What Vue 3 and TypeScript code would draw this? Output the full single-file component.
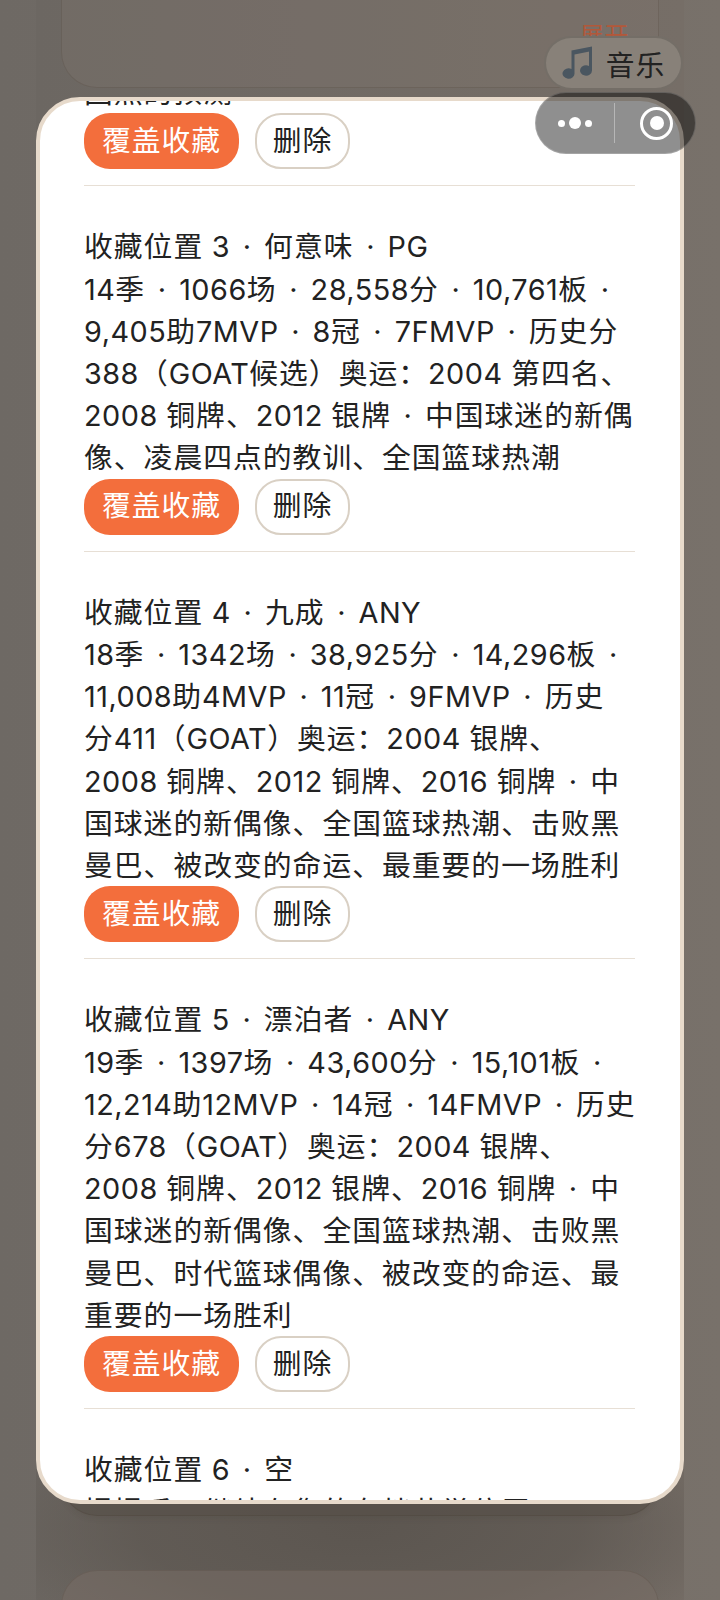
<script setup lang="ts">
interface Slot { title: string; body: string }
interface Token { text: string; kind: 'cjk' | 'mid' | 'latin' }

const slots: Slot[] = [
  { title: '收藏位置 3 · 何意味 · PG', body: '14季 · 1066场 · 28,558分 · 10,761板 · 9,405助7MVP · 8冠 · 7FMVP · 历史分388（GOAT候选）奥运：2004 第四名、2008 铜牌、2012 银牌 · 中国球迷的新偶像、凌晨四点的教训、全国篮球热潮' },
  { title: '收藏位置 4 · 九成 · ANY', body: '18季 · 1342场 · 38,925分 · 14,296板 · 11,008助4MVP · 11冠 · 9FMVP · 历史\n分411（GOAT）奥运：2004 银牌、\n2008 铜牌、2012 铜牌、2016 铜牌 · 中国球迷的新偶像、全国篮球热潮、击败黑曼巴、被改变的命运、最重要的一场胜利' },
  { title: '收藏位置 5 · 漂泊者 · ANY', body: '19季 · 1397场 · 43,600分 · 15,101板 · 12,214助12MVP · 14冠 · 14FMVP · 历史分678（GOAT）奥运：2004 银牌、2008 铜牌、2012 银牌、2016 铜牌 · 中国球迷的新偶像、全国篮球热潮、击败黑曼巴、时代篮球偶像、被改变的命运、最重要的一场胜利' },
]

const tokens = (text: string): Token[] =>
  text
    .split(/(·|[\u3000-\u9fff\uff00-\uffef]+)/)
    .filter((t) => t.length > 0)
    .map((t): Token => ({
      text: t,
      kind: t === '·' ? 'mid' : /^[\u3000-\u9fff\uff00-\uffef]/.test(t) ? 'cjk' : 'latin',
    }))

const lastTitle = '收藏位置 6 · 空'
</script>

<template>
  <div class="screen">
    <div class="page">
      <section class="card card-top"><span class="expand">展开</span></section>
      <section class="card card-mid"></section>
      <section class="card card-low"></section>
    </div>

    <div class="modal">
      <div class="scroller">
        <div class="list">
          <article class="slot slot-first">
            <p class="line cjk">固然的预测</p>
            <div class="actions">
              <button class="btn primary">覆盖收藏</button>
              <button class="btn ghost">删除</button>
            </div>
          </article>
          <article v-for="s in slots" :key="s.title" class="slot">
            <p class="line"><span v-for="(t, i) in tokens(s.title)" :key="i" :class="t.kind">{{ t.text }}</span></p>
            <p class="line"><span v-for="(t, i) in tokens(s.body)" :key="i" :class="t.kind">{{ t.text }}</span></p>
            <div class="actions">
              <button class="btn primary">覆盖收藏</button>
              <button class="btn ghost">删除</button>
            </div>
          </article>
          <article class="slot slot-last">
            <p class="line"><span v-for="(t, i) in tokens(lastTitle)" :key="i" :class="t.kind">{{ t.text }}</span></p>
            <p class="line cjk">提提后，继续在您的存档荣誉位置</p>
          </article>
        </div>
      </div>
    </div>

    <div class="music">
      <svg class="note" width="34" height="36" viewBox="0 0 34 36" aria-hidden="true">
        <path d="M9.5 5.5 L30 1.5 V6 L12.5 9.5 V28 A6 5.2 0 1 1 9.5 24 Z" fill="#4a5660" />
        <path d="M27 4 H30 V25.5 A6 5.2 0 1 1 27 21 Z" fill="#4a5660" />
      </svg>
      <span>音乐</span>
    </div>

    <div class="capsule">
      <div class="dots"><i class="dot"></i><i class="dot big"></i><i class="dot"></i></div>
      <i class="sep"></i>
      <div class="ring"><i></i></div>
    </div>
  </div>
</template>

<style>
html, body { margin: 0; padding: 0; }
</style>

<style scoped>
.screen {
  position: relative;
  width: 720px;
  height: 1600px;
  overflow: hidden;
  background: linear-gradient(90deg, #6e6964 0%, #726c67 50%, #78716a 100%);
  font-family: Inter, "Noto Sans CJK SC", sans-serif;
  letter-spacing: 0.5px;
  color: #222;
}
.page {
  box-sizing: border-box;
  height: 1600px;
  margin: 0 36px;
  padding: 0 25px;
  display: flex;
  flex-direction: column;
  gap: 54px;
  background:
    radial-gradient(ellipse 62% 9% at 50% 95.5%, #5c5650 0%, rgba(92, 86, 80, 0.75) 55%, rgba(92, 86, 80, 0) 100%),
    linear-gradient(90deg, #6c6762 0%, #766e67 100%);
}
.card {
  box-sizing: border-box;
  flex: none;
  border: 1px solid rgba(60, 48, 36, 0.16);
  border-radius: 36px;
}
.card-top {
  height: 88px;
  border-top: 0;
  border-radius: 0 0 36px 36px;
  background: rgba(130, 120, 110, 0.25);
  display: flex;
  justify-content: flex-end;
  padding: 20px 29px 0 0;
}
.expand {
  font-size: 24px;
  line-height: 32px;
  color: #b2583a;
}
.card-mid {
  height: 1374px;
  background: rgba(84, 76, 70, 0.55);
  box-shadow: 0 2px 6px rgba(50, 40, 30, 0.1);
}
.card-low {
  height: 120px;
  background: rgba(120, 110, 102, 0.55);
}

.modal {
  position: absolute;
  left: 36px;
  top: 97px;
  width: 648px;
  height: 1407px;
  box-sizing: border-box;
  border: 4px solid #e7dacb;
  border-radius: 44px;
  background: #fff;
  overflow: hidden;
}
.scroller {
  height: 100%;
  overflow: hidden;
}
.list {
  margin-top: -29px;
  padding: 0 45px 0 44px;
}
.slot {
  padding-top: 40px;
  padding-bottom: 16.2px;
  border-bottom: 1px solid #e7dfd5;
}
.slot-first { padding-top: 0; }
.slot-last { border-bottom: 0; }
.line {
  margin: 0 -3px 0 0;
  font-size: 28.8px;
  line-height: 42.2px;
  color: #222;
  white-space: pre-line;
}
.cjk { letter-spacing: 1px; }
.mid { padding: 0 4px; }
.actions {
  display: flex;
  align-items: center;
  gap: 16px;
  margin-top: -1px;
}
.btn {
  box-sizing: border-box;
  height: 56px;
  margin: 0;
  padding: 0;
  border-radius: 26px;
  font: inherit;
  font-size: 28.8px;
  letter-spacing: 1px;
  line-height: 1;
}
.primary {
  border: 0;
  width: 155px;
  background: #f36e3c;
  color: #fff;
}
.ghost {
  width: 95px;
  background: #fff;
  border: 2px solid #d9d0c4;
  color: #222;
}

.music {
  position: absolute;
  left: 544px;
  top: 36px;
  box-sizing: border-box;
  width: 139px;
  height: 54px;
  border: 2px solid rgba(104, 98, 92, 0.6);
  border-radius: 27px;
  background: #888179;
  display: flex;
  align-items: center;
  justify-content: center;
  gap: 10px;
  font-size: 28.8px;
  letter-spacing: 1px;
  color: #222;
}
.note { flex: none; }
.capsule {
  position: absolute;
  left: 535px;
  top: 92px;
  box-sizing: border-box;
  width: 161px;
  height: 62px;
  border: 1px solid rgba(255, 255, 255, 0.18);
  border-radius: 31px;
  background: rgba(0, 0, 0, 0.44);
  display: flex;
  align-items: center;
}
.dots {
  width: 78px;
  display: flex;
  align-items: center;
  justify-content: center;
  gap: 4px;
}
.dot {
  width: 7px;
  height: 7px;
  border-radius: 50%;
  background: #fff;
}
.dot.big { width: 12px; height: 12px; }
.sep {
  width: 1px;
  height: 40px;
  background: rgba(255, 255, 255, 0.35);
}
.ring {
  box-sizing: border-box;
  width: 33px;
  height: 33px;
  margin-left: 25px;
  border: 3px solid #fff;
  border-radius: 50%;
  display: flex;
  align-items: center;
  justify-content: center;
}
.ring i {
  width: 14px;
  height: 14px;
  border-radius: 50%;
  background: #fff;
}
</style>
